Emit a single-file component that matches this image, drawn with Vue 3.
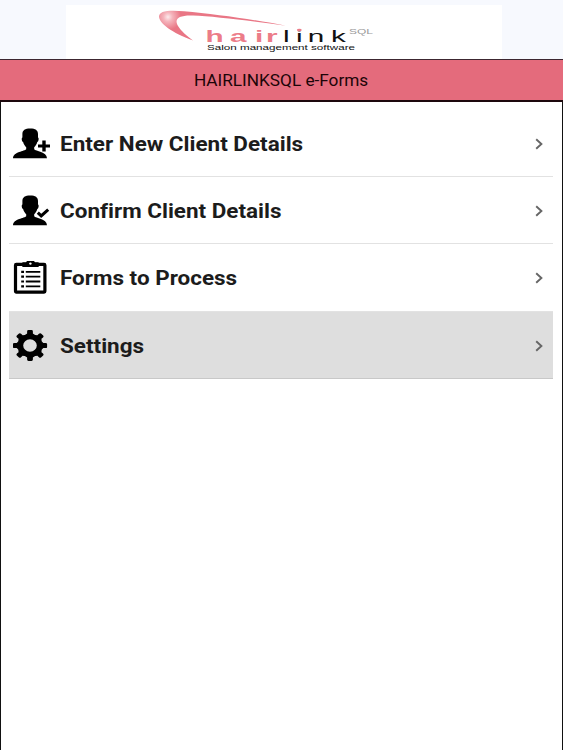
<script setup>
import { ref } from 'vue';

const items = [
  { id: 0, text: 'Enter New Client Details', icon: 'add' },
  { id: 1, text: 'Confirm Client Details', icon: 'confirm' },
  { id: 2, text: 'Forms to Process', icon: 'forms' },
  { id: 3, text: 'Settings', icon: 'settings' },
]

const selected = ref(3)
</script>

<template>
  <div class="main">
    <header class="brand">
      <div class="brand-logo">
        <svg width="240" height="54" viewBox="150 5 240 54">
          <defs>
            <radialGradient id="swoosh" gradientUnits="userSpaceOnUse" cx="168" cy="17" r="13">
              <stop offset="0" stop-color="#fdeaec" />
              <stop offset="0.35" stop-color="#f5b4bc" />
              <stop offset="1" stop-color="#e97685" />
            </radialGradient>
          </defs>
          <path d="M193 40.5C172 33 159 23 159 16.5C159 11 168 9.8 184 11.2C216 14 257 20 286 25.7C251 21 213 16.2 193 15.5C178 15 174 19 178 26C181 31 187 36 193 40.5Z" fill="url(#swoosh)" />
          <g class="logo-name" transform="scale(1.75 1)">
            <text x="117.4 131.4 145.7 152" y="41.6" fill="#ec7c88" font-weight="700">hair</text>
            <text x="161.7 169.2 175.8 189.2" y="41.6" fill="#111">link</text>
          </g>
          <rect x="294" y="28" width="9" height="3.2" fill="#fff" />
          <ellipse cx="299.3" cy="30" rx="2.4" ry="1.3" fill="#ec7c88" />
          <text class="logo-sql" x="349" y="34.3" textLength="24" lengthAdjust="spacingAndGlyphs">SQL</text>
          <text class="logo-sub" x="207" y="49.8" textLength="148" lengthAdjust="spacingAndGlyphs">Salon management software</text>
        </svg>
      </div>
    </header>
    <div class="title-bar">
      <h1 class="title">HAIRLINKSQL e-Forms</h1>
    </div>
    <div class="container">
      <ul class="menu">
        <li v-for="item in items" :key="item.id" class="menu-item" :class="{ active: item.id === selected }" @click="selected = item.id">
          <svg class="menu-icon" width="38" height="34" viewBox="0 0 38 34">
            <g v-if="item.icon === 'add' || item.icon === 'confirm'">
              <path d="M9.4 7C9.4 3.3 12 1.5 17.2 1.5S25 3.3 25 7V10.5C26.2 11 25.6 14.5 24.3 15C23.6 17.5 22.5 19 21.2 20.2V22.2C22.5 24.3 33.8 24.5 34 31.3H0C0.2 24.5 11.8 24.3 13.2 22.2V20.2C11.9 19 10.8 17.5 10.1 15C8.8 14.5 8.2 11 9.4 10.5Z" />
              <path v-if="item.icon === 'add'" d="M29.3 13.5H32.7V17.4H37V20.6H32.7V24.5H29.3V20.6H25V17.4H29.3Z" />
              <path v-else d="M24.8 18.6L28.2 21.9L35.2 15.6" fill="none" stroke="#000" stroke-width="3" />
            </g>
            <g v-else-if="item.icon === 'forms'">
              <rect x="2.5" y="3.4" width="29.4" height="27.7" rx="0.8" fill="none" stroke="#000" stroke-width="3.2" />
              <path d="M9 2.4Q9 1.2 10.2 1.2H13L14 0H21L22 1.2H24.8Q26 1.2 26 2.4V4.8Q26 6 24.8 6H10.2Q9 6 9 4.8Z" />
              <circle cx="17.4" cy="2.6" r="1.2" fill="#fff" />
              <path d="M8.2 10.9H11M8.2 15.7H11M8.2 20.5H11M8.2 25.3H11" stroke="#000" stroke-width="2.2" />
              <path d="M12.8 10.9H27.3M12.8 15.7H27.3M12.8 20.5H27.3M12.8 25.3H27.3" stroke="#000" stroke-width="1.8" />
            </g>
            <g v-else transform="translate(17 16.5)">
              <g transform="scale(1.11 1)">
                <path v-for="n in 8" :key="n" :transform="`rotate(${n * 45})`" d="M-4.8 -10L-2.6 -12V-14Q-2.6 -15.4 -1.4 -15.4H1.4Q2.6 -15.4 2.6 -14V-12L4.8 -10Z" />
              </g>
              <ellipse rx="9.5" ry="8.9" fill="none" stroke="#000" stroke-width="5.4" />
            </g>
          </svg>
          <span class="menu-text">{{ item.text }}</span>
          <svg class="menu-arrow" width="8" height="12" viewBox="0 0 8 12">
            <path d="M1.2 1.3L6.4 6L1.2 10.7" fill="none" stroke="#666" stroke-width="1.9" />
          </svg>
        </li>
      </ul>
    </div>
  </div>
</template>

<style>
body {
  margin: 0;
}
</style>

<style scoped>
.main {
  box-sizing: border-box;
  height: 100vh;
  display: flex;
  flex-direction: column;
  overflow: hidden;
  background: #fff;
  font-family: Roboto, "Liberation Sans", sans-serif;
}

.brand {
  height: 59px;
  flex-shrink: 0;
  padding: 5px 61px 0 66px;
  box-sizing: border-box;
  background: #f7f9fe;
}

.brand-logo {
  height: 54px;
  padding-left: 84px;
  background: #fff;
}

.brand-logo svg {
  display: block;
}

.logo-name {
  font-family: "Liberation Sans", sans-serif;
  font-size: 17px;
}

.logo-sql {
  font-family: "Liberation Sans", sans-serif;
  font-size: 7.5px;
  fill: #999;
}

.logo-sub {
  font-family: "Liberation Sans", sans-serif;
  font-size: 6.8px;
  fill: #111;
}

.title-bar {
  height: 43px;
  flex-shrink: 0;
  box-sizing: border-box;
  border-top: 1px solid #3c2630;
  border-bottom: 2px solid #1d080d;
  background: #e46b7c;
  display: flex;
  align-items: center;
  justify-content: center;
}

.title {
  margin: 0;
  font-size: 16px;
  font-weight: 400;
  color: #1c0508;
  transform: scaleX(1.075);
}

.container {
  flex: 1;
  padding: 7.4px 8.6px 0 8.4px;
  border: solid #111;
  border-width: 0 1px;
}

.menu {
  list-style: none;
  margin: 0;
  padding: 0;
}

.menu-item {
  height: 67.4px;
  box-sizing: border-box;
  padding: 2px 10.5px 0 3.7px;
  border-bottom: 1px solid #e2e2e2;
  display: flex;
  align-items: center;
  cursor: pointer;
}

.menu-item.active {
  background: #dedede;
  border-bottom-color: #c8c8c8;
}

.menu-icon {
  flex-shrink: 0;
}

.menu-text {
  flex: 1;
  margin-left: 9px;
  font-size: 20.5px;
  font-weight: 700;
  line-height: 24px;
  color: #1c1c1c;
  font-variant-ligatures: none;
  transform: scaleX(1.096);
  transform-origin: left center;
}
</style>
